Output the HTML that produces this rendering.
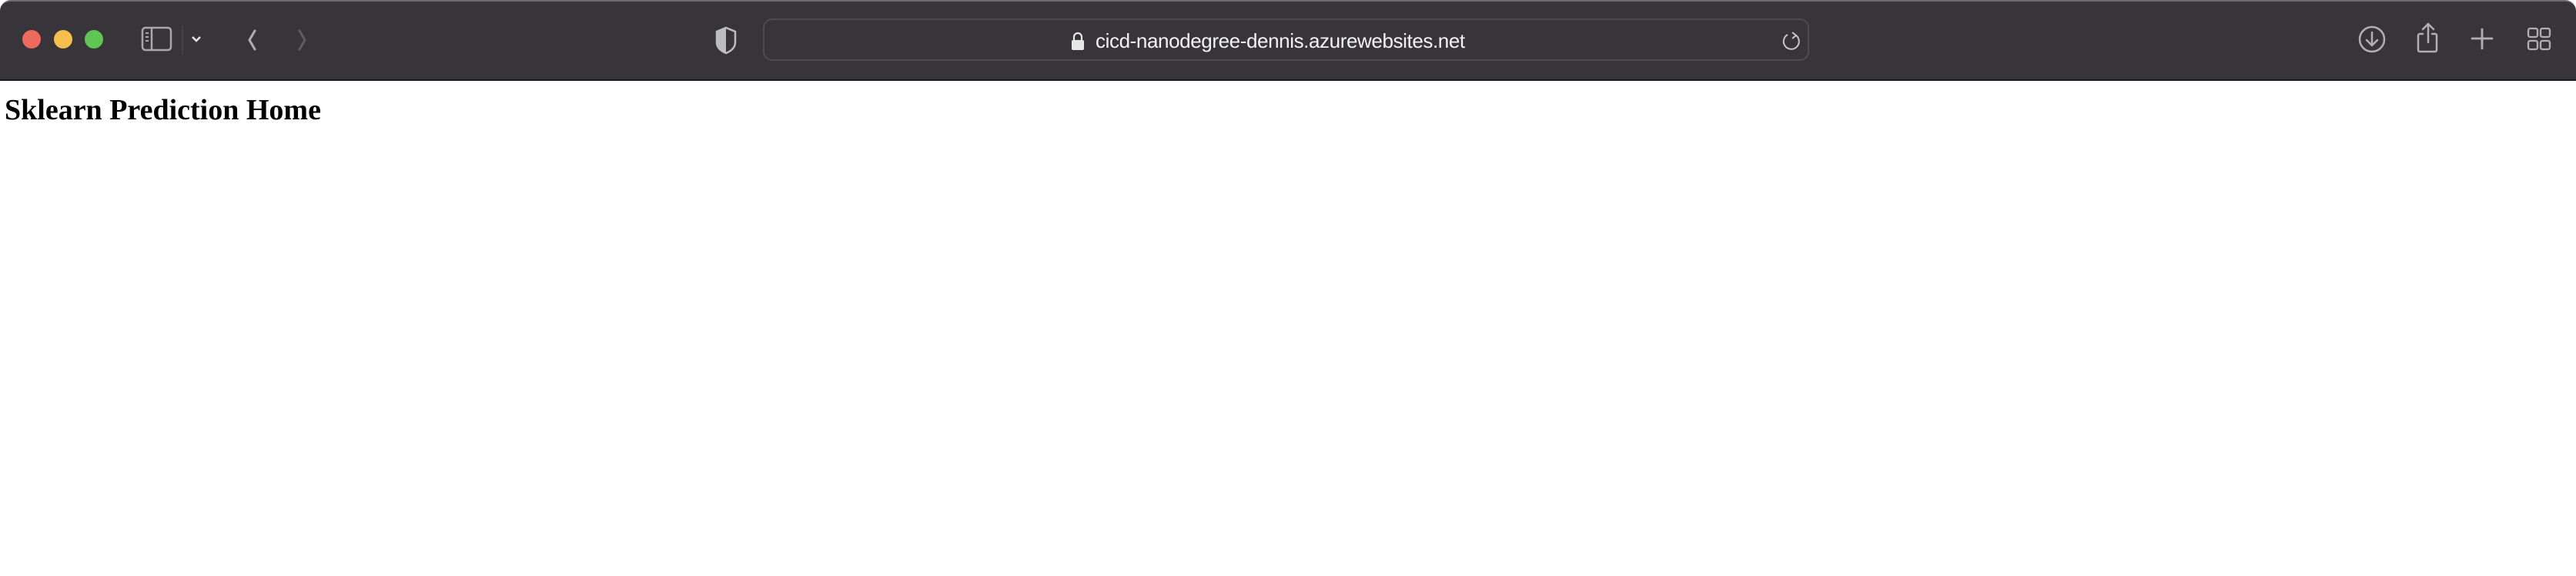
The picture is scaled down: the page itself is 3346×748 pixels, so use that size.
<!DOCTYPE html>
<html><head><meta charset="utf-8"><style>
html,body{margin:0;padding:0;background:#fff;width:3346px;height:748px;overflow:hidden}
.bar{position:absolute;left:0;top:0;width:3346px;height:105px;background:#373539;border-top:2px solid #6e6c70;box-sizing:border-box;border-radius:14px 14px 0 0;border-bottom:2px solid #1a191b}
.dot{position:absolute;top:39px;width:24px;height:24px;border-radius:50%}
.url{position:absolute;left:991px;top:24px;width:1359px;height:55px;border:2px solid #4d4b50;border-radius:12px;box-sizing:border-box}
.utext{position:absolute;left:1423px;top:38px;font:26px "Liberation Sans",sans-serif;color:#f2f2f2;white-space:nowrap;letter-spacing:-0.4px}
h1{position:absolute;left:6px;top:121px;margin:0;font:bold 38px "Liberation Serif",serif;color:#000;white-space:nowrap}
svg{position:absolute}
</style></head><body>
<div class="bar"></div>
<div class="dot" style="left:29px;background:#ee6a5e"></div>
<div class="dot" style="left:70px;background:#f5be4f"></div>
<div class="dot" style="left:110px;background:#61c554"></div>
<svg style="left:180px;top:30px" width="90" height="42"><rect x="5" y="6" width="37" height="29" rx="4" fill="none" stroke="#a9a8ab" stroke-width="2.5"/><line x1="17" y1="6" x2="17" y2="35" stroke="#a9a8ab" stroke-width="2.5"/><line x1="9" y1="13" x2="13" y2="13" stroke="#a9a8ab" stroke-width="2"/><line x1="9" y1="18" x2="13" y2="18" stroke="#a9a8ab" stroke-width="2"/><line x1="9" y1="23" x2="13" y2="23" stroke="#a9a8ab" stroke-width="2"/><line x1="57" y1="4" x2="57" y2="40" stroke="#4a484c" stroke-width="1.5"/><path d="M70 18 L75 23 L80 18" fill="none" stroke="#e6e6e6" stroke-width="2.5"/></svg>
<svg style="left:310px;top:36px" width="100" height="32"><path d="M21 4 L14 16 L21 28" fill="none" stroke="#b0afb2" stroke-width="3" stroke-linecap="round"/><path d="M79 4 L86 16 L79 28" fill="none" stroke="#5e5c60" stroke-width="3" stroke-linecap="round"/></svg>
<svg style="left:926px;top:33px" width="34" height="38"><path d="M17 3 L29 8 L29 22 Q29 31 17 36 Q5 31 5 22 L5 8 Z" fill="none" stroke="#bdbcbf" stroke-width="2.5"/><path d="M17 3 L5 8 L5 22 Q5 31 17 36 Z" fill="#bdbcbf"/></svg>
<div class="url"></div>
<svg style="left:1390px;top:41px" width="20" height="26"><path d="M5 11 V7 a5 5 0 0 1 10 0 V11" fill="none" stroke="#e8e8e8" stroke-width="2.2"/><rect x="2" y="11" width="16" height="13" rx="2" fill="#e8e8e8"/></svg>
<div class="utext">cicd-nanodegree-dennis.azurewebsites.net</div>
<svg style="left:2313px;top:38px" width="28" height="30"><path d="M20 8 A10 10 0 1 1 9 7" fill="none" stroke="#c8c8ca" stroke-width="2"/><path d="M15 4 L20 8 L15 12" fill="none" stroke="#c8c8ca" stroke-width="2"/></svg>
<svg style="left:3060px;top:28px" width="260" height="46"><circle cx="21" cy="23" r="16" fill="none" stroke="#b0afb2" stroke-width="2.5"/><path d="M21 14 V31 M14 24 L21 31 L28 24" fill="none" stroke="#b0afb2" stroke-width="2.5" stroke-linecap="round"/><path d="M87 16 H83 a2 2 0 0 0 -2 2 V37 a2 2 0 0 0 2 2 H103 a2 2 0 0 0 2 -2 V18 a2 2 0 0 0 -2 -2 H99 M94 27 V4 M87 10 L94 3 L101 10" fill="none" stroke="#b0afb2" stroke-width="2.5" stroke-linecap="round"/><path d="M164 10 V35 M151 22 H177" stroke="#b0afb2" stroke-width="2.8" stroke-linecap="round"/><rect x="224" y="9" width="12" height="11" rx="2.5" fill="none" stroke="#b0afb2" stroke-width="2.3"/><rect x="240" y="9" width="12" height="11" rx="2.5" fill="none" stroke="#b0afb2" stroke-width="2.3"/><rect x="224" y="25" width="12" height="11" rx="2.5" fill="none" stroke="#b0afb2" stroke-width="2.3"/><rect x="240" y="25" width="12" height="11" rx="2.5" fill="none" stroke="#b0afb2" stroke-width="2.3"/></svg>
<h1>Sklearn Prediction Home</h1>
</body></html>
